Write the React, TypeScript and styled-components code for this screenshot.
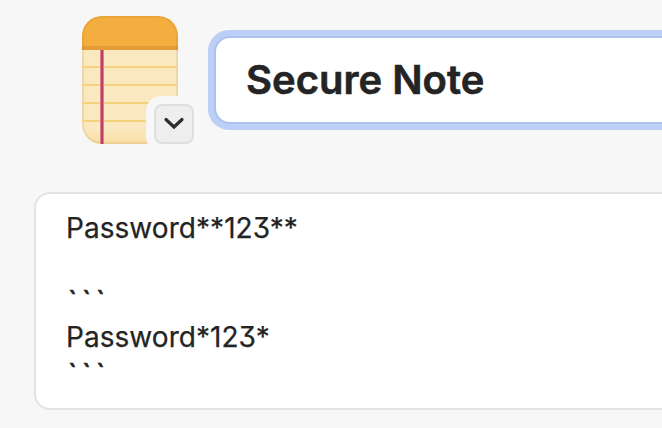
import React from "react";
import styled, { createGlobalStyle } from "styled-components";

const Global = createGlobalStyle`
  *{box-sizing:border-box}
  body{margin:0;background:#f7f7f7;font-family:Inter,sans-serif;font-optical-sizing:none;color:#242424;overflow:hidden;-webkit-font-smoothing:antialiased}
`;
const Page = styled.main`width:662px;height:428px;padding-top:16px;overflow:hidden;`;
const Header = styled.header`display:flex;height:176px;padding-left:82px;`;
const IconButton = styled.button`width:112px;height:128px;padding:0;border:0;background:none;flex:none;`;
const TitleField = styled.div`margin:14px 0 0 14px;width:600px;height:100px;flex:none;border:6px solid #bbcff8;border-radius:21px;background:#bbcff8;`;
const TitleInner = styled.div`height:88px;border:2px solid #adc2ed;border-radius:16px;background:#fff;padding-left:30px;display:flex;align-items:center;`;
const Title = styled.h1`margin:0;font-size:40px;line-height:48px;font-weight:600;white-space:nowrap;-webkit-text-stroke:.6px currentColor;`;
const Note = styled.section`width:700px;height:218px;margin-left:34px;border:2px solid #e3e3e3;border-radius:16px;background:#fff;padding:16px 30px;`;
const Line = styled.p<{ $fence?: boolean }>`
  margin:0;height:36.4px;font-size:28px;line-height:36.4px;white-space:pre;
  font-feature-settings:"cv09";
  -webkit-text-stroke:${p => p.$fence ? ".7px" : ".25px"} currentColor;
  letter-spacing:${p => p.$fence ? "5px" : ".05px"};
  padding-left:${p => p.$fence ? "2px" : "0"};
`;

export default function App() {
  return <><Global /><Page>
    <Header>
      <IconButton aria-label="Note type">
        <svg width="112" height="128" viewBox="0 0 112 128">
          <defs>
            <clipPath id="note"><rect width="96" height="128" rx="20" /></clipPath>
            <linearGradient id="shade" x1="0" x2="0" y1="0" y2="1">
              <stop offset="0" stopColor="#fae9c0" /><stop offset="1" stopColor="#fbdda4" />
            </linearGradient>
          </defs>
          <g clipPath="url(#note)">
            <path fill="#fae9c0" d="M0 0h96v128H0z" />
            <path fill="url(#shade)" d="M0 112h96v16H0z" />
            <path fill="#f4ae3f" d="M0 0h96v34H0z" />
            <path fill="#e39b36" d="M0 30h96v4H0z" />
            <rect x="1" y="1" width="94" height="126" rx="19" fill="none" stroke="#9a7020" strokeOpacity=".13" strokeWidth="2" />
            <path stroke="#f6d27e" strokeWidth="2" d="M0 51h96M0 69h96M0 87h96M0 105h96" />
            <path fill="#d98388" d="M18 34h4v94h-4z" />
            <path fill="#c13c68" d="M19 34h2v94h-2z" />
          </g>
          <rect x="64" y="80" width="56" height="56" rx="15" fill="#f7f7f7" />
          <rect x="73" y="89" width="38" height="38" rx="7" fill="#eeeeee" stroke="#dfdfdf" strokeWidth="2" />
          <path d="M84 103.5l8 7.5 8-7.5" fill="none" stroke="#2c2c2c" strokeWidth="3.2" strokeLinecap="round" strokeLinejoin="miter" />
        </svg>
      </IconButton>
      <TitleField><TitleInner><Title>Secure Note</Title></TitleInner></TitleField>
    </Header>
    <Note><Line>Password**123**</Line><Line /><Line $fence>```</Line><Line>Password*123*</Line><Line $fence>```</Line></Note>
  </Page></>;
}
